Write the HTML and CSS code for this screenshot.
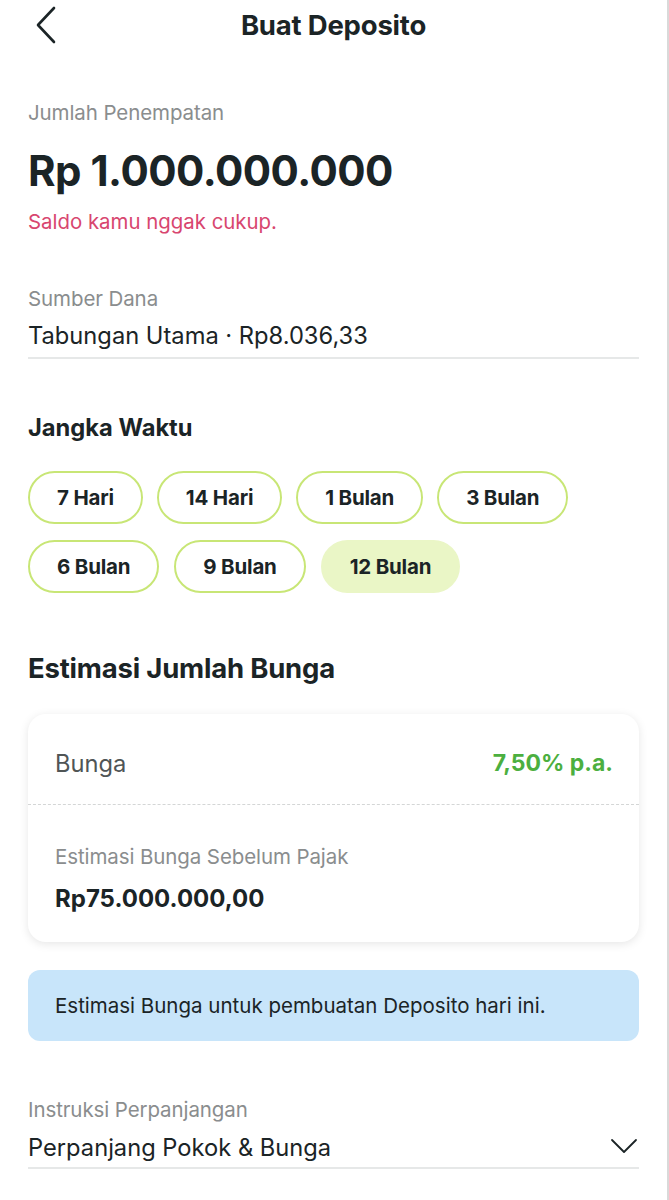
FILE: index.html
```html
<!DOCTYPE html>
<html>
<head>
    <meta charset="UTF-8">
    <title>Buat Deposito</title>
    <link rel="stylesheet" href="styles.css">
</head>
<body>
    <div class="header">
        <span class="back">
            <svg width="24" height="40" viewBox="0 0 24 40"><path d="M20 3 L4 20 L20 37" fill="none" stroke="#1b2426" stroke-width="2.6" stroke-linecap="round" stroke-linejoin="round"/></svg>
        </span>
        <h1>Buat Deposito</h1>
    </div>

    <div class="page">
        <div class="amount">
            <div class="label">Jumlah Penempatan</div>
            <div class="big">Rp 1.000.000.000</div>
            <div class="error">Saldo kamu nggak cukup.</div>
        </div>

        <div class="field source">
            <div class="label">Sumber Dana</div>
            <div class="value">Tabungan Utama · Rp8.036,33</div>
        </div>

        <h2 class="term-title">Jangka Waktu</h2>
        <div class="chips">
            <span class="chip">7 Hari</span>
            <span class="chip">14 Hari</span>
            <span class="chip">1 Bulan</span>
            <span class="chip">3 Bulan</span>
        </div>
        <div class="chips">
            <span class="chip">6 Bulan</span>
            <span class="chip">9 Bulan</span>
            <span class="chip active">12 Bulan</span>
        </div>

        <h2 class="est-title">Estimasi Jumlah Bunga</h2>
        <div class="card">
            <div class="rate-row">
                <span>Bunga</span>
                <span class="rate">7,50% p.a.</span>
            </div>
            <div class="est">
                <div class="label">Estimasi Bunga Sebelum Pajak</div>
                <div class="est-value">Rp75.000.000,00</div>
            </div>
        </div>

        <div class="info">Estimasi Bunga untuk pembuatan Deposito hari ini.</div>

        <div class="field renew">
            <div class="label">Instruksi Perpanjangan</div>
            <div class="value select">
                <span>Perpanjang Pokok &amp; Bunga</span>
                <svg width="28" height="16" viewBox="0 0 28 16"><path d="M2 2 L14 14 L26 2" fill="none" stroke="#1b2426" stroke-width="1.8" stroke-linecap="round" stroke-linejoin="round"/></svg>
            </div>
        </div>
    </div>
</body>
</html>
```

FILE: styles.css
```css
body, div, h1, h2, span {
    margin: 0;
    padding: 0;
}
body {
    background-color: #ffffff;
    font-family: Inter, "Noto Sans", sans-serif;
    color: #1b2426;
    width: 669px;
    border-right: 2px solid #d9d9d9;
    box-sizing: border-box;
    min-height: 1200px;
}
.header {
    position: relative;
    height: 50px;
    display: flex;
    align-items: center;
    justify-content: center;
}
.header h1 {
    font-size: 27.5px;
    font-weight: 700;
    letter-spacing: -0.2px;
}
.header .back {
    position: absolute;
    left: 34px;
    top: 5px;
}
.page {
    padding: 0 28px;
}
.label {
    font-size: 20.5px;
    line-height: 26px;
    color: #8a8d8e;
    letter-spacing: -0.1px;
}
.amount {
    padding-top: 50px;
}
.big {
    font-size: 42px;
    font-weight: 700;
    letter-spacing: -0.5px;
    margin-top: 20px;
    line-height: 50px;
}
.error {
    font-size: 20.4px;
    line-height: 26px;
    color: #d8466f;
    margin-top: 13px;
}
.field .value {
    font-size: 23.7px;
    line-height: 30px;
    color: #1b2426;
    border-bottom: 2px solid #e6e8e8;
}
.source {
    margin-top: 51px;
}
.source .value {
    margin-top: 9px;
    padding-bottom: 6px;
}
.term-title {
    font-size: 23.7px;
    line-height: 30px;
    font-weight: 700;
    margin-top: 54px;
}
.chips {
    display: flex;
    gap: 14px;
    margin-top: 28px;
}
.chips + .chips {
    margin-top: 16px;
    gap: 15px;
}
.chip {
    height: 53px;
    box-sizing: border-box;
    padding: 0 27px;
    border: 2px solid #c8e676;
    border-radius: 27px;
    display: flex;
    align-items: center;
    font-size: 20.5px;
    font-weight: 700;
    letter-spacing: -0.2px;
}
.chip.active {
    background-color: #eaf6c6;
    border-color: #eaf6c6;
}
.est-title {
    font-size: 27.5px;
    line-height: 34px;
    font-weight: 700;
    margin-top: 58px;
    letter-spacing: -0.2px;
}
.card {
    margin-top: 29px;
    border-radius: 18px;
    background: #ffffff;
    box-shadow: 0 2px 10px rgba(0, 0, 0, 0.10);
}
.rate-row {
    display: flex;
    justify-content: space-between;
    align-items: center;
    height: 91px;
    box-sizing: border-box;
    padding: 8px 26px 0 27px;
    font-size: 23.7px;
    color: #505556;
    border-bottom: 1px dashed #d4d6d6;
}
.rate-row .rate {
    color: #4caf3f;
    font-weight: 700;
    font-size: 23px;
}
.est {
    padding: 39px 27px 28px;
}
.est-value {
    font-size: 24px;
    line-height: 30px;
    font-weight: 700;
    margin-top: 14px;
}
.info {
    margin-top: 28px;
    background-color: #c8e5fa;
    border-radius: 12px;
    padding: 23px 27px 22px;
    font-size: 20.5px;
    line-height: 26px;
    color: #1b2426;
}
.renew {
    margin-top: 56px;
}
.renew .value {
    margin-top: 10px;
    padding-bottom: 4px;
}
.select {
    display: flex;
    justify-content: space-between;
    align-items: center;
}
.select svg {
    margin-right: 1px;
    margin-top: -4px;
}
```
